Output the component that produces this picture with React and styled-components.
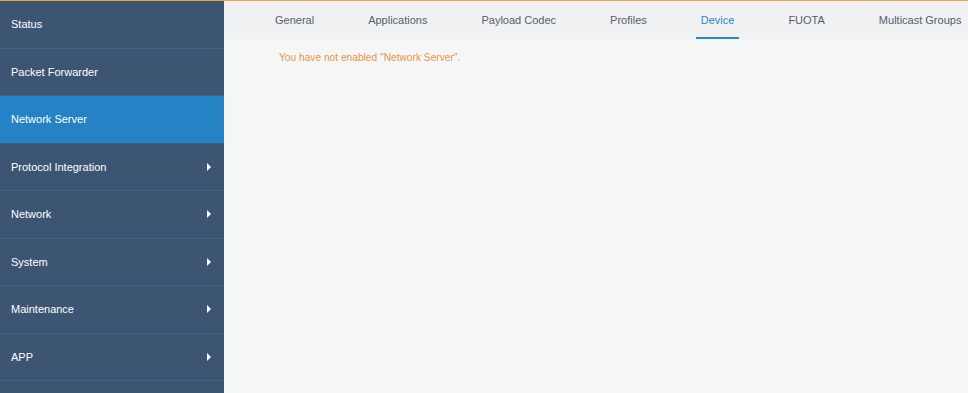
import React from 'react';
import styled, { createGlobalStyle } from 'styled-components';

const GlobalStyle = createGlobalStyle`
  html, body {
    margin: 0;
    padding: 0;
    height: 100%;
  }
  body {
    font-family: "Liberation Sans", Arial, sans-serif;
    background: #f5f7f7;
  }
  #root {
    height: 100%;
  }
`;

const menu = [
  { label: 'Status' },
  { label: 'Packet Forwarder' },
  { label: 'Network Server', active: true },
  { label: 'Protocol Integration', sub: true },
  { label: 'Network', sub: true },
  { label: 'System', sub: true },
  { label: 'Maintenance', sub: true },
  { label: 'APP', sub: true },
];

const tabs = ['General', 'Applications', 'Payload Codec', 'Profiles', 'Device', 'FUOTA', 'Multicast Groups'];

export default function App() {
  return (
    <>
      <GlobalStyle />
      <Page>
        <Sidebar>
          {menu.map((m) => (
            <MenuItem key={m.label} $active={m.active}>
              <span>{m.label}</span>
              {m.sub && <Arrow />}
            </MenuItem>
          ))}
        </Sidebar>
        <Main>
          <TabBar>
            {tabs.map((t) => (
              <Tab key={t} $active={t === 'Device'}>{t}</Tab>
            ))}
          </TabBar>
          <Content>
            <Notice>You have not enabled "Network Server".</Notice>
          </Content>
        </Main>
      </Page>
    </>
  );
}

const Page = styled.div`
  display: flex;
  height: 100vh;
  border-top: 1px solid #f0a04c;
  box-sizing: border-box;
  overflow: hidden;
`;

const Sidebar = styled.nav`
  width: 224px;
  flex-shrink: 0;
  background: #3b5573;
  display: flex;
  flex-direction: column;
`;

const MenuItem = styled.div`
  height: 46.5px;
  flex-shrink: 0;
  display: flex;
  align-items: center;
  justify-content: space-between;
  padding: 0 13px 0 11px;
  border-bottom: 1px solid #42607f;
  background: ${(p) => (p.$active ? '#2482c5' : 'transparent')};
  color: #ffffff;
  font-size: 11px;
  cursor: pointer;
`;

const Arrow = styled.i`
  width: 0;
  height: 0;
  border-top: 4px solid transparent;
  border-bottom: 4px solid transparent;
  border-left: 4px solid #ffffff;
`;

const Main = styled.main`
  flex: 1;
  display: flex;
  flex-direction: column;
  min-width: 0;
`;

const TabBar = styled.div`
  height: 38px;
  flex-shrink: 0;
  display: flex;
  align-items: stretch;
  padding-left: 24px;
  background: #f0f1f3;
  white-space: nowrap;
`;

const Tab = styled.div`
  display: flex;
  align-items: center;
  margin: 0 22px;
  padding: 0 5px;
  font-size: 11px;
  color: ${(p) => (p.$active ? '#2d86c8' : '#555e6b')};
  border-bottom: 2px solid ${(p) => (p.$active ? '#2d86c8' : 'transparent')};
  border-top: 2px solid transparent;
  cursor: pointer;
`;

const Content = styled.div`
  flex: 1;
  background: #f5f7f7;
  padding: 13px 55px;
`;

const Notice = styled.div`
  font-size: 10.2px;
  color: #ea9345;
`;
